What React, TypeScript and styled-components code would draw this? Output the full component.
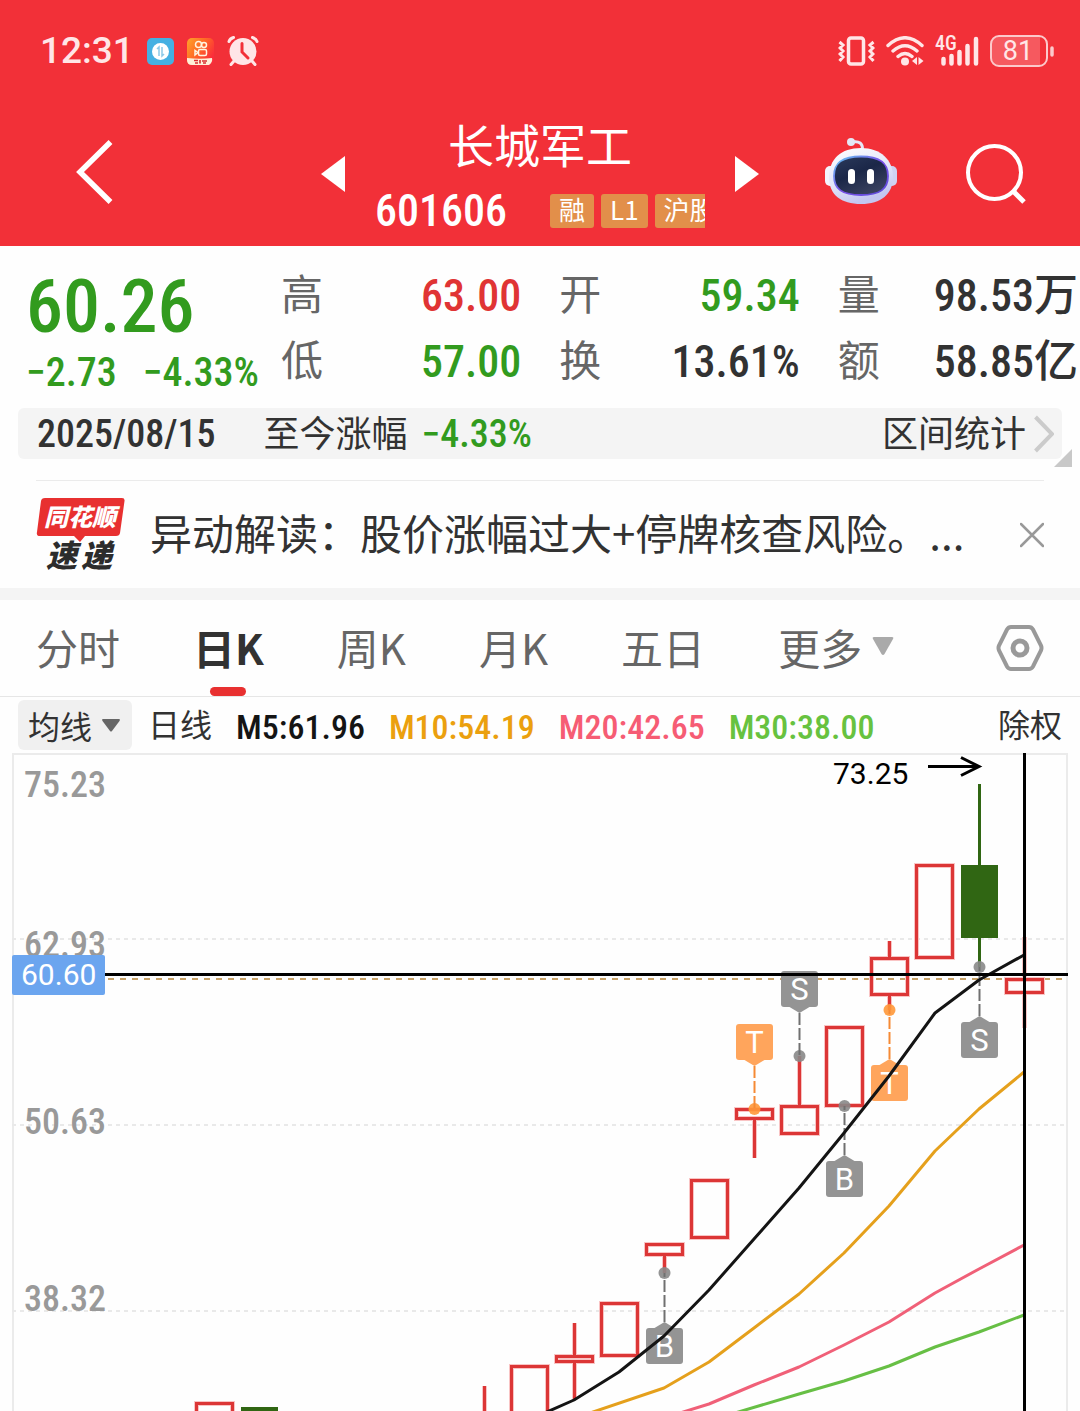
import React from "react";
import styled, { createGlobalStyle } from "styled-components";

const CJK = '"Noto Sans CJK SC", "Noto Sans", sans-serif';
const NUM = '"Roboto Condensed", Roboto, "Noto Sans CJK SC", sans-serif';

const color = {
  brand: "#f23038",
  up: "#e03434",
  down: "#329b1e",
  ink: "#323232",
  label: "#666666",
  mute: "#999999",
  panel: "#f4f4f4",
  line: "#ebebeb",
};

const GlobalStyle = createGlobalStyle`
  *, *::before, *::after { box-sizing: border-box; }
  body { margin: 0; background: #fefefe; color: ${color.ink}; font-family: ${CJK}; }
  button, select { font: inherit; color: inherit; background: none; border: 0; padding: 0; margin: 0; cursor: pointer; }
  svg { display: block; flex: none; }
`;

const Page = styled.main`
  overflow: hidden;
`;

/* ---------- top area ---------- */

const Top = styled.header`
  background: ${color.brand};
  color: #fff;
`;

const StatusBar = styled.div`
  display: flex;
  align-items: center;
  justify-content: space-between;
  height: 102px;
  padding: 0 26px 0 40px;
  color: #ffe6e7;
`;

const StatusGroup = styled.div<{ $gap: number }>`
  display: flex;
  align-items: center;
  gap: ${(p) => p.$gap}px;
`;

const Clock = styled.time`
  font: 500 37px/44px Roboto, sans-serif;
`;

const TitleBar = styled.div`
  display: grid;
  grid-template-columns: 1fr auto 1fr;
  align-items: center;
  height: 144px;
  padding: 0 54px;
`;

const IconButton = styled.button`
  display: flex;
  align-items: center;
  justify-content: center;
`;

const Leading = styled.div`
  padding: 0 0 4px 22px;
`;

const Actions = styled.div`
  display: flex;
  align-items: center;
  justify-content: flex-end;
  gap: 68px;
`;

const StockSwitch = styled.div`
  display: flex;
  align-items: center;
  gap: 30px;
`;

const StockTitle = styled.div`
  width: 330px;
`;

const StockName = styled.h1`
  margin: 0;
  padding-bottom: 8px;
  text-align: center;
  font-size: 46px;
  line-height: 66px;
  font-weight: 400;
`;

const CodeRow = styled.div`
  display: flex;
  align-items: center;
  justify-content: space-between;
  height: 54px;
`;

const Code = styled.span`
  font: 500 44px/54px ${NUM};
`;

const Tags = styled.div`
  display: flex;
  gap: 7px;
  width: 155px;
  overflow: hidden;
`;

const Tag = styled.span`
  flex: none;
  padding: 0 9px 4px;
  border-radius: 3px;
  background: #e28f4a;
  font-size: 26px;
  line-height: 30px;
`;

/* ---------- quote ---------- */

const Quote = styled.section`
  display: grid;
  grid-template-columns: 255px 1fr;
  padding: 17px 2px 13px 26px;
`;

const Price = styled.div`
  color: ${color.down};
  font: 500 74px/88px ${NUM};
`;

const Change = styled.div`
  display: flex;
  gap: 26px;
  color: ${color.down};
  font: 500 40px/44px ${NUM};
`;

const Fields = styled.dl`
  display: grid;
  grid-template-columns: repeat(3, 1fr);
  column-gap: 38px;
  margin: 0;
`;

const Field = styled.div`
  display: flex;
  justify-content: space-between;
  align-items: center;
  height: 66px;
  white-space: nowrap;
`;

const FieldName = styled.dt`
  padding-bottom: 8px;
  color: ${color.label};
  font-size: 42px;
  line-height: 58px;
`;

const FieldValue = styled.dd<{ $color: string }>`
  margin: 0;
  color: ${(p) => p.$color};
  font: 500 44px/66px ${NUM};
`;

const RangeBar = styled.section`
  position: relative;
  display: flex;
  align-items: center;
  height: 51px;
  margin: 0 18px;
  padding: 0 8px 0 19px;
  border-radius: 6px;
  background: ${color.panel};
  font-size: 36px;
`;

const RangeDate = styled.time`
  margin-right: 48px;
  font: 500 38px/50px ${NUM};
`;

const RangeName = styled.span`
  padding-bottom: 6px;
  line-height: 44px;
`;

const RangeValue = styled.span`
  margin-left: 14px;
  color: ${color.down};
  font: 500 38px/50px ${NUM};
`;

const RangeLink = styled.button`
  display: flex;
  align-items: center;
  gap: 8px;
  margin-left: auto;
`;

const Corner = styled.svg`
  position: absolute;
  right: -10px;
  bottom: -8px;
`;

/* ---------- news ---------- */

const News = styled.section`
  display: flex;
  align-items: center;
  height: 108px;
  margin: 21px 36px 0;
  border-top: 1px solid ${color.line};
`;

const NewsText = styled.a`
  flex: 1;
  min-width: 0;
  margin: 0 24px;
  padding-bottom: 6px;
  overflow: hidden;
  white-space: nowrap;
  color: inherit;
  text-decoration: none;
  font-size: 42px;
  line-height: 64px;
`;

const Divider = styled.div`
  height: 12px;
  background: ${color.panel};
`;

/* ---------- tabs ---------- */

const Tabs = styled.nav`
  display: flex;
  align-items: stretch;
  gap: 73px;
  height: 97px;
  padding: 0 36px;
  border-bottom: 1px solid #e6e6e6;
`;

const Tab = styled.button<{ $active?: boolean }>`
  position: relative;
  display: flex;
  align-items: center;
  gap: 10px;
  padding-bottom: 4px;
  color: ${(p) => (p.$active ? color.ink : color.label)};
  font-size: 42px;
  font-weight: ${(p) => (p.$active ? 700 : 400)};
  white-space: nowrap;

  &::after {
    content: "";
    display: ${(p) => (p.$active ? "block" : "none")};
    position: absolute;
    left: 50%;
    bottom: 0;
    width: 36px;
    height: 9px;
    margin-left: -18px;
    border-radius: 5px;
    background: #e83030;
  }
`;

const Settings = styled(IconButton)`
  margin-left: auto;
`;

const Legend = styled.section`
  display: flex;
  align-items: center;
  gap: 24px;
  height: 56px;
  padding: 0 18px;
  font-size: 32px;
  line-height: 50px;
  white-space: nowrap;
`;

const SelectBox = styled.label`
  position: relative;
  display: flex;
  align-items: center;
  margin-right: -8px;
  border-radius: 6px;
  background: #f0f0f0;
`;

const Select = styled.select`
  appearance: none;
  width: 114px;
  height: 50px;
  padding: 0 0 6px 10px;
`;

const SelectArrow = styled.svg`
  position: absolute;
  right: 12px;
  top: 19px;
  pointer-events: none;
`;

const Period = styled.span`
  padding-bottom: 4px;
`;

const Average = styled.span<{ $color: string }>`
  padding-top: 4px;
  color: ${(p) => p.$color};
  font: 500 34px/50px ${NUM};
`;

const Rights = styled.button`
  margin-left: auto;
  padding-bottom: 4px;
`;

/* ---------- chart ---------- */

const Chart = styled.svg`
  width: 100%;
  height: auto;
`;

const AxisText = styled.text`
  fill: ${color.mute};
  font: 500 36px ${NUM};
`;

const CursorText = styled.text`
  fill: #fff;
  font: 400 30px Roboto, sans-serif;
`;

const PeakText = styled.text`
  fill: #000;
  font: 400 30px Roboto, sans-serif;
`;

const FlagText = styled.text`
  fill: #fff;
  font: 400 31px Roboto, sans-serif;
  text-anchor: middle;
`;

type Candle = { x: number; top: number; bottom: number; high?: number; low?: number; fall?: boolean };

const candles: Candle[] = [
  { x: 214, top: 649, bottom: 700 },
  { x: 259, top: 654, bottom: 700, fall: true },
  { x: 484, top: 670, bottom: 700, high: 633 },
  { x: 529, top: 612, bottom: 700 },
  { x: 574, top: 602, bottom: 610, high: 570, low: 647 },
  { x: 619, top: 549, bottom: 604 },
  { x: 664, top: 490, bottom: 503, low: 520 },
  { x: 709, top: 426, bottom: 486 },
  { x: 754, top: 355, bottom: 367, low: 405 },
  { x: 799, top: 352, bottom: 382, high: 303 },
  { x: 844, top: 273, bottom: 354 },
  { x: 889, top: 204, bottom: 243, high: 188, low: 257 },
  { x: 934, top: 111, bottom: 206 },
  { x: 979, top: 112, bottom: 185, high: 31, low: 214, fall: true },
  { x: 1024, top: 225, bottom: 241, high: 184, low: 275 },
];

type Flag = { x: number; dot: number; box: number; text: string; hot?: boolean };

const flags: Flag[] = [
  { x: 664, dot: 520, box: 575, text: "B" },
  { x: 754, dot: 356, box: 271, text: "T", hot: true },
  { x: 799, dot: 303, box: 218, text: "S" },
  { x: 844, dot: 353, box: 408, text: "B" },
  { x: 889, dot: 257, box: 312, text: "T", hot: true },
  { x: 979, dot: 214, box: 269, text: "S" },
];

const averages = [
  {
    color: "#141414",
    points: "540,662 574,647 619,619 664,583 709,537 754,486 799,435 844,380 889,323 935,260 979,227 1024,202",
  },
  {
    color: "#e5a01c",
    points: "590,660 664,635 709,609 754,575 799,541 844,500 889,453 935,398 979,356 1024,319",
  },
  {
    color: "#f06078",
    points: "680,660 709,651 754,632 799,614 844,592 889,569 935,540 979,516 1024,492",
  },
  {
    color: "#67bf45",
    points: "735,660 799,641 844,628 889,613 935,594 979,579 1024,562",
  },
];

const gridLines = [186, 372, 558];
const axisLabels = [
  { y: 44, text: "75.23" },
  { y: 204, text: "62.93" },
  { y: 381, text: "50.63" },
  { y: 558, text: "38.32" },
];

function CandleShape({ x, top, bottom, high, low, fall }: Candle) {
  const cx = x + 0.5;
  const wicks =
    (high !== undefined ? `M${cx} ${high}V${top}` : "") + (low !== undefined ? `M${cx} ${bottom}V${low}` : "");
  if (fall) {
    return (
      <g>
        <path d={wicks} stroke="#306613" strokeWidth={3} />
        <rect x={x - 18} y={top} width={37} height={bottom - top} fill="#306613" />
      </g>
    );
  }
  const outline = `${wicks}M${x - 17.5} ${top + 1.5}H${x + 18.5}V${bottom - 1.5}H${x - 17.5}Z`;
  return (
    <g fill="none">
      <path d={outline} stroke="#f9c4c4" strokeWidth={5} />
      <path d={outline} stroke="#dc3636" strokeWidth={3} />
    </g>
  );
}

function FlagShape({ x, dot, box, text, hot }: Flag) {
  const fill = hot ? "#ffa55c" : "#949494";
  const dash = hot ? "#f58a35" : "#707070";
  const above = box < dot;
  const edge = above ? box + 36 : box;
  const tip = above ? edge + 6 : edge - 6;
  const cx = x + 0.5;
  return (
    <g>
      <circle cx={cx} cy={dot} r={6} fill={hot ? "#ff9838" : "#888888"} fillOpacity={0.9} />
      <line x1={cx} x2={cx} y1={tip} y2={dot} stroke={dash} strokeWidth={2} strokeDasharray="12 3" />
      <path d={`M${cx - 10} ${edge}L${cx} ${tip}L${cx + 10} ${edge}Z`} fill={fill} />
      <rect x={cx - 18.5} y={box} width={37} height={36} rx={3} fill={fill} />
      <FlagText x={cx} y={box + 29}>{text}</FlagText>
    </g>
  );
}

function KLineChart() {
  return (
    <Chart viewBox="0 0 1080 658" role="img" aria-label="日K">
      <path d="M13 658V1H1067V658" fill="none" stroke={color.line} strokeWidth={2} />
      {gridLines.map((y) => (
        <line key={y} x1={12} x2={1066} y1={y} y2={y} stroke="#e9e9e9" strokeWidth={2} strokeDasharray="4 4" />
      ))}
      {axisLabels.map((l) => (
        <AxisText key={l.text} x={24} y={l.y}>{l.text}</AxisText>
      ))}
      <line x1={108} x2={1066} y1={226} y2={226} stroke="#c8a268" strokeWidth={2} strokeDasharray="6 6" />
      {candles.map((c) => (
        <CandleShape key={c.x} {...c} />
      ))}
      {flags.map((f) => (
        <FlagShape key={f.x} {...f} />
      ))}
      {averages.map((a) => (
        <polyline key={a.color} points={a.points} fill="none" stroke={a.color} strokeWidth={3} strokeLinejoin="round" />
      ))}
      <line x1={1024.5} x2={1024.5} y1={0} y2={658} stroke="#000" strokeWidth={3} />
      <line x1={104} x2={1068} y1={221.5} y2={221.5} stroke="#000" strokeWidth={3} />
      <rect x={12} y={202} width={93} height={40} rx={2} fill="#6ba5ef" />
      <CursorText x={21} y={232}>60.60</CursorText>
      <PeakText x={833} y={31}>73.25</PeakText>
      <path d="M928 13.5H978M961 4.500L979 13.500L961 22.500" fill="none" stroke="#000" strokeWidth={3} />
    </Chart>
  );
}

/* ---------- icons ---------- */

const TransferAppIcon = () => (
  <svg width="27" height="27" viewBox="0 0 27 27">
    <rect width="27" height="27" rx="5" fill="#45b0e2" />
    <circle cx="13.500" cy="13.500" r="8.500" fill="#fff" />
    <path d="M10 11l2-2v9M15 9v9l2-2" fill="none" stroke="#8cc9e8" strokeWidth="1.500" />
  </svg>
);

const VideoAppIcon = () => (
  <svg width="27" height="27" viewBox="0 0 27 27">
    <defs>
      <linearGradient id="video" x1="0" y1="0" x2="1" y2="0.600">
        <stop offset="0" stopColor="#ffa52a" />
        <stop offset="0.500" stopColor="#ff6a26" />
        <stop offset="1" stopColor="#fb2d3b" />
      </linearGradient>
    </defs>
    <rect width="27" height="27" rx="5" fill="url(#video)" />
    <path d="M0 20q13 1.500 25 0q1 4-3 7H5q-5 0-5-5z" fill="#fff0d8" />
    <g fill="none" stroke="#fff5e0" strokeWidth="1.500">
      <circle cx="11.500" cy="6.500" r="3" />
      <circle cx="17" cy="7" r="2.500" />
      <rect x="11.500" y="11.500" width="8" height="6" rx="1.500" />
      <path d="M11 14.500l-3-2v4.500z" />
    </g>
    <path d="M7 22.500h4M8 25h3M13 22v3.500M15 23h5M16 25h3" stroke="#d93030" strokeWidth="1.600" />
  </svg>
);

const AlarmIcon = () => (
  <svg width="32" height="30" viewBox="0 0 32 30">
    <circle cx="16" cy="15.500" r="13.500" fill="#ffe6e7" />
    <path d="M7 25l-3 3.500M25 25l3 3.500M2 5.500q1-3 4.500-4M30 5.500q-1-3-4.500-4" stroke="#ffe6e7" strokeWidth="3" strokeLinecap="round" fill="none" />
    <path d="M15 7.500V16l6 6" fill="none" stroke={color.brand} strokeWidth="3" strokeLinecap="round" />
  </svg>
);

const VibrateIcon = () => (
  <svg width="37" height="30" viewBox="0 0 37 30" fill="none" stroke="#ffe6e7">
    <rect x="10.500" y="2" width="15" height="26" rx="2.500" strokeWidth="3.500" />
    <path d="M1.500 6l3.500 3-3 3 3 3-3 3 3 3-3.500 4M35.500 6l-3.500 3 3 3-3 3 3 3-3 3 3.500 4" strokeWidth="3" />
  </svg>
);

const WifiIcon = () => (
  <svg width="38" height="30" viewBox="0 0 38 30" fill="none" stroke="#ffe6e7" strokeLinecap="round">
    <path d="M2 9.500Q19-6 36 9.500M7 15Q19 4.500 31 15M12 20.500Q19 14.500 26 20.500" strokeWidth="3.400" />
    <circle cx="19" cy="25.500" r="4" fill="#ffe6e7" stroke="none" />
    <path d="M31 21v8l-5-4zM32.500 21v8l5-4z" fill="#ffe6e7" stroke="none" />
  </svg>
);

const SignalText = styled.text`
  fill: #ffe6e7;
  font: 500 20px "Roboto Condensed", Roboto, sans-serif;
`;

const SignalIcon = () => (
  <svg width="44" height="40" viewBox="0 -5 44 40">
    <SignalText x="0" y="14">4G</SignalText>
    <g stroke="#ffe6e7" strokeWidth="4.500" strokeLinecap="round">
      <path d="M8.500 23v4.500M16.500 20v7.500M24.500 16v11.500M32.500 10v17.500M41 3v24.500" />
    </g>
  </svg>
);

const BatteryText = styled.text`
  fill: #ffe6e7;
  font: 400 27px Roboto, sans-serif;
  text-anchor: middle;
`;

const BatteryIcon = () => (
  <svg width="64" height="32" viewBox="0 0 64 32">
    <path d="M8 2h42v28H8q-6 0-6-6V8q0-6 6-6z" fill="#f6595f" />
    <rect x="1" y="1" width="56" height="30" rx="8" fill="none" stroke="#fcc9cb" strokeWidth="2" />
    <path d="M62 13v7" stroke="#fcc9cb" strokeWidth="3.500" strokeLinecap="round" />
    <BatteryText x="28" y="25">81</BatteryText>
  </svg>
);

const BackIcon = () => (
  <svg width="38" height="66" viewBox="0 0 38 66">
    <path d="M34.500 3L4 33L34.500 63" fill="none" stroke="#fff" strokeWidth="5.500" />
  </svg>
);

const Arrow = ({ right }: { right?: boolean }) => (
  <svg width="24" height="36" viewBox="0 0 24 36">
    <path d={right ? "M0 0L24 18L0 36Z" : "M24 0L0 18L24 36Z"} fill="#fff" />
  </svg>
);

const RobotIcon = () => (
  <svg width="73" height="72" viewBox="0 0 73 72">
    <defs>
      <linearGradient id="shell" x1="0" y1="0" x2="0.400" y2="1">
        <stop offset="0" stopColor="#ffffff" />
        <stop offset="0.600" stopColor="#e2e4f8" />
        <stop offset="1" stopColor="#c3c6f0" />
      </linearGradient>
      <linearGradient id="rim" x1="0" y1="0" x2="1" y2="1">
        <stop offset="0" stopColor="#62c8f0" />
        <stop offset="0.500" stopColor="#7a50e8" />
        <stop offset="1" stopColor="#5a4ad8" />
      </linearGradient>
      <linearGradient id="screen" x1="0" y1="0" x2="0.600" y2="1">
        <stop offset="0" stopColor="#2b3a5c" />
        <stop offset="0.500" stopColor="#1b2748" />
        <stop offset="1" stopColor="#39415f" />
      </linearGradient>
    </defs>
    <path d="M27 4q11-2 10.500 8" fill="none" stroke="#e6e8f8" strokeWidth="3" />
    <circle cx="26" cy="4" r="4" fill="#e4e8f6" />
    <rect x="0" y="28" width="12" height="20" rx="5" fill="#f4f4fc" />
    <rect x="60" y="28" width="12" height="20" rx="5" fill="#cfd2f2" />
    <path d="M36 10C56 10 68 22 68 39S56 66 36 66S4 57 4 39S16 10 36 10Z" fill="url(#shell)" />
    <path d="M36 18.500C55 18.500 63 25 63 38S55 57 36 57S9 51 9 38S17 18.500 36 18.500Z" fill="url(#screen)" stroke="url(#rim)" strokeWidth="1.800" />
    <rect x="23" y="31" width="7" height="15" rx="3.500" fill="#fff" />
    <rect x="42" y="31" width="7" height="15" rx="3.500" fill="#fff" />
  </svg>
);

const SearchIcon = () => (
  <svg width="60" height="60" viewBox="0 0 60 60" fill="none" stroke="#fff" strokeWidth="4">
    <circle cx="28.500" cy="28.500" r="26.500" />
    <path d="M47 47L58 58" strokeWidth="5" />
  </svg>
);

const ChevronIcon = () => (
  <svg width="20" height="38" viewBox="0 0 20 38">
    <path d="M1.500 2L18 19L1.500 36" fill="none" stroke="#cbcbcb" strokeWidth="4" />
  </svg>
);

const LogoTop = styled.text`
  fill: #fff;
  font: italic 900 24px ${CJK};
`;

const LogoBottom = styled.text`
  fill: #2c2c2c;
  font: italic 900 31px ${CJK};
`;

const NewsLogo = () => (
  <svg width="90" height="74" viewBox="0 0 90 74">
    <path d="M9 0H86Q89 0 88.500 3L84 35Q83.500 38 80 38H49L44 44L38 38H4Q0 38 1 34L5 3Q5.500 0 9 0Z" fill="#e83030" />
    <LogoTop x="8" y="28">同花顺</LogoTop>
    <LogoBottom x="10 45" y="69">速递</LogoBottom>
  </svg>
);

const CloseIcon = () => (
  <svg width="24" height="26" viewBox="0 0 24 26">
    <path d="M1 2L23 24M23 2L1 24" stroke="#999" strokeWidth="2.500" strokeLinecap="round" />
  </svg>
);

const NutIcon = () => (
  <svg width="48" height="48" viewBox="0 0 48 48" fill="none" stroke="#999" strokeWidth="5">
    <path d="M15 3H33Q35.500 3 37 5.500L45 21.500Q46 24 45 26.500L37 42.500Q35.500 45 33 45H15Q12.500 45 11 42.500L3 26.500Q2 24 3 21.500L11 5.500Q12.500 3 15 3Z" strokeWidth="4" />
    <circle cx="24" cy="24" r="7" />
  </svg>
);

/* ---------- page ---------- */

const fields = [
  { name: "高", value: "63.00", color: color.up },
  { name: "开", value: "59.34", color: color.down },
  { name: "量", value: "98.53万", color: color.ink },
  { name: "低", value: "57.00", color: color.down },
  { name: "换", value: "13.61%", color: color.ink },
  { name: "额", value: "58.85亿", color: color.ink },
];

const legend = [
  { text: "M5:61.96", color: "#141414" },
  { text: "M10:54.19", color: "#eba00e" },
  { text: "M20:42.65", color: "#f65c74" },
  { text: "M30:38.00", color: "#67c23f" },
];

export default function App() {
  return (
    <Page>
      <GlobalStyle />
      <Top>
        <StatusBar>
          <StatusGroup $gap={13}>
            <Clock>12:31</Clock>
            <TransferAppIcon />
            <VideoAppIcon />
            <AlarmIcon />
          </StatusGroup>
          <StatusGroup $gap={11}>
            <VibrateIcon />
            <WifiIcon />
            <SignalIcon />
            <BatteryIcon />
          </StatusGroup>
        </StatusBar>
        <TitleBar>
          <Leading>
            <IconButton aria-label="返回"><BackIcon /></IconButton>
          </Leading>
          <StockSwitch>
            <IconButton aria-label="上一只"><Arrow /></IconButton>
            <StockTitle>
              <StockName>长城军工</StockName>
              <CodeRow>
                <Code>601606</Code>
                <Tags>
                  <Tag>融</Tag>
                  <Tag>L1</Tag>
                  <Tag>沪股通</Tag>
                </Tags>
              </CodeRow>
            </StockTitle>
            <IconButton aria-label="下一只"><Arrow right /></IconButton>
          </StockSwitch>
          <Actions>
            <IconButton aria-label="智能助手"><RobotIcon /></IconButton>
            <IconButton aria-label="搜索"><SearchIcon /></IconButton>
          </Actions>
        </TitleBar>
      </Top>

      <Quote>
        <div>
          <Price>60.26</Price>
          <Change>
            <span>−2.73</span>
            <span>−4.33%</span>
          </Change>
        </div>
        <Fields>
          {fields.map((f) => (
            <Field key={f.name}>
              <FieldName>{f.name}</FieldName>
              <FieldValue $color={f.color}>{f.value}</FieldValue>
            </Field>
          ))}
        </Fields>
      </Quote>

      <RangeBar>
        <RangeDate>2025/08/15</RangeDate>
        <RangeName>至今涨幅</RangeName>
        <RangeValue>−4.33%</RangeValue>
        <RangeLink>
          <RangeName>区间统计</RangeName>
          <ChevronIcon />
        </RangeLink>
        <Corner width="18" height="18" viewBox="0 0 18 18">
          <path d="M18 0V18H0Z" fill="#c8c8c8" />
        </Corner>
      </RangeBar>

      <News>
        <NewsLogo />
        <NewsText href="#news">异动解读：股价涨幅过大+停牌核查风险。...</NewsText>
        <IconButton aria-label="关闭"><CloseIcon /></IconButton>
      </News>
      <Divider />

      <Tabs>
        <Tab>分时</Tab>
        <Tab $active>日K</Tab>
        <Tab>周K</Tab>
        <Tab>月K</Tab>
        <Tab>五日</Tab>
        <Tab>
          更多
          <svg width="22" height="20" viewBox="0 0 22 20">
            <path d="M2 1H20Q22 1 21 3L12.500 18Q11 20 9.500 18L1 3Q0 1 2 1Z" fill="#aaa" />
          </svg>
        </Tab>
        <Settings aria-label="设置"><NutIcon /></Settings>
      </Tabs>

      <Legend>
        <SelectBox>
          <Select aria-label="指标" defaultValue="均线">
            <option>均线</option>
          </Select>
          <SelectArrow width="18" height="13" viewBox="0 0 18 13">
            <path d="M1 0H17Q18.500 0 17.500 2L10 12Q9 13 8 12L0.500 2Q-0.500 0 1 0Z" fill="#666" />
          </SelectArrow>
        </SelectBox>
        <Period>日线</Period>
        {legend.map((l) => (
          <Average key={l.text} $color={l.color}>{l.text}</Average>
        ))}
        <Rights>除权</Rights>
      </Legend>

      <KLineChart />
    </Page>
  );
}
